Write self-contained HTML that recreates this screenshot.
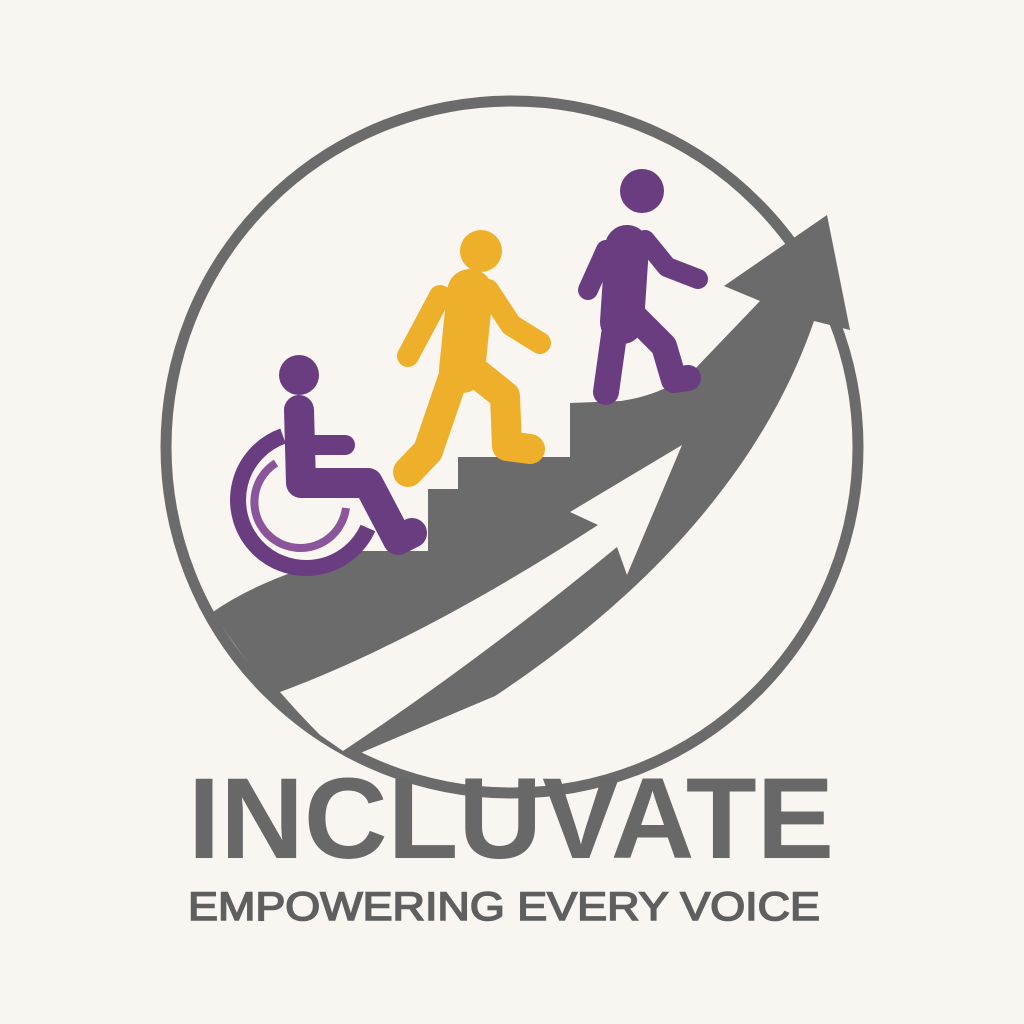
<!DOCTYPE html>
<html><head><meta charset="utf-8"><style>
html,body{margin:0;padding:0;background:#f9f6f1;}
svg{display:block;}
</style></head><body>
<svg width="1024" height="1024" viewBox="0 0 1024 1024" xmlns="http://www.w3.org/2000/svg">
<rect width="1024" height="1024" fill="#f9f6f1"/>
<circle cx="512" cy="447" r="346" fill="none" stroke="#6b6b6b" stroke-width="11"/>
<!-- gray mass -->
<path fill="#6b6b6b" d="M213,612 Q260,578 360,551 L428,551 L428,489 L458,489 L458,457 L570,457 L570,403 L621,401 Q662,395 692,372 L760,301 L724,286 L827,215 L850,330 L814,321 C780,420 700,560 495,696 L351,757 L343,751 Q305,720 272,692 Q240,655 213,612 Z"/>
<path fill="#f9f6f1" d="M280,692 Q420,640 598,525 L570,512 L682,445 L627,575 L617,547 Q480,660 343,751 L320,735 Q300,715 280,692 Z"/>
<!-- wheelchair -->
<g fill="none" stroke-linecap="round" stroke-linejoin="round">
<path d="M283,436 A68,68 0 1 0 368,528" stroke="#6a3d80" stroke-width="16" stroke-linecap="butt"/>
<path d="M276,463 A46,46 0 1 0 346,508" stroke="#8a559a" stroke-width="8" stroke-linecap="butt"/>
<path d="M299,410 L301,483 L368,483 L398,540 L412,533" stroke="#6a3d80" stroke-width="30"/>
<path d="M300,445 L345,445" stroke="#6a3d80" stroke-width="20"/>
</g>
<circle cx="299" cy="375" r="20" fill="#6a3d80"/>
<!-- yellow walker -->
<g fill="none" stroke="#eeb02a" stroke-linecap="round" stroke-linejoin="round">
<path d="M470,292 L462,370" stroke-width="46"/>
<path d="M440,296 L408,356" stroke-width="22"/>
<path d="M488,290 L511,325 L540,343" stroke-width="22"/>
<path d="M469,367 L505,396 L507,446 L530,449" stroke-width="30"/>
<path d="M455,372 L428,451 L408,472" stroke-width="30"/>
</g>
<circle cx="481" cy="251" r="21" fill="#eeb02a"/>
<!-- purple walker -->
<g fill="none" stroke="#6a3d80" stroke-linecap="round" stroke-linejoin="round">
<path d="M627,247 L622,322" stroke-width="44"/>
<path d="M606,250 L588,290" stroke-width="20"/>
<path d="M645,240 L667,267 L698,279" stroke-width="20"/>
<path d="M634,316 L664,346 L674,380 L688,378" stroke-width="26"/>
<path d="M615,328 L606,392" stroke-width="26"/>
</g>
<circle cx="642" cy="191" r="22" fill="#6a3d80"/>
<text x="188" y="858" font-family="Liberation Sans, sans-serif" font-weight="bold" font-size="115" fill="#686868" textLength="646" lengthAdjust="spacingAndGlyphs">INCLUVATE</text>
<text x="188" y="920" font-family="Liberation Sans, sans-serif" font-size="40" fill="#5f5f5f" textLength="632" lengthAdjust="spacingAndGlyphs" stroke="#5f5f5f" stroke-width="1.6">EMPOWERING EVERY VOICE</text>
</svg>
</body></html>
